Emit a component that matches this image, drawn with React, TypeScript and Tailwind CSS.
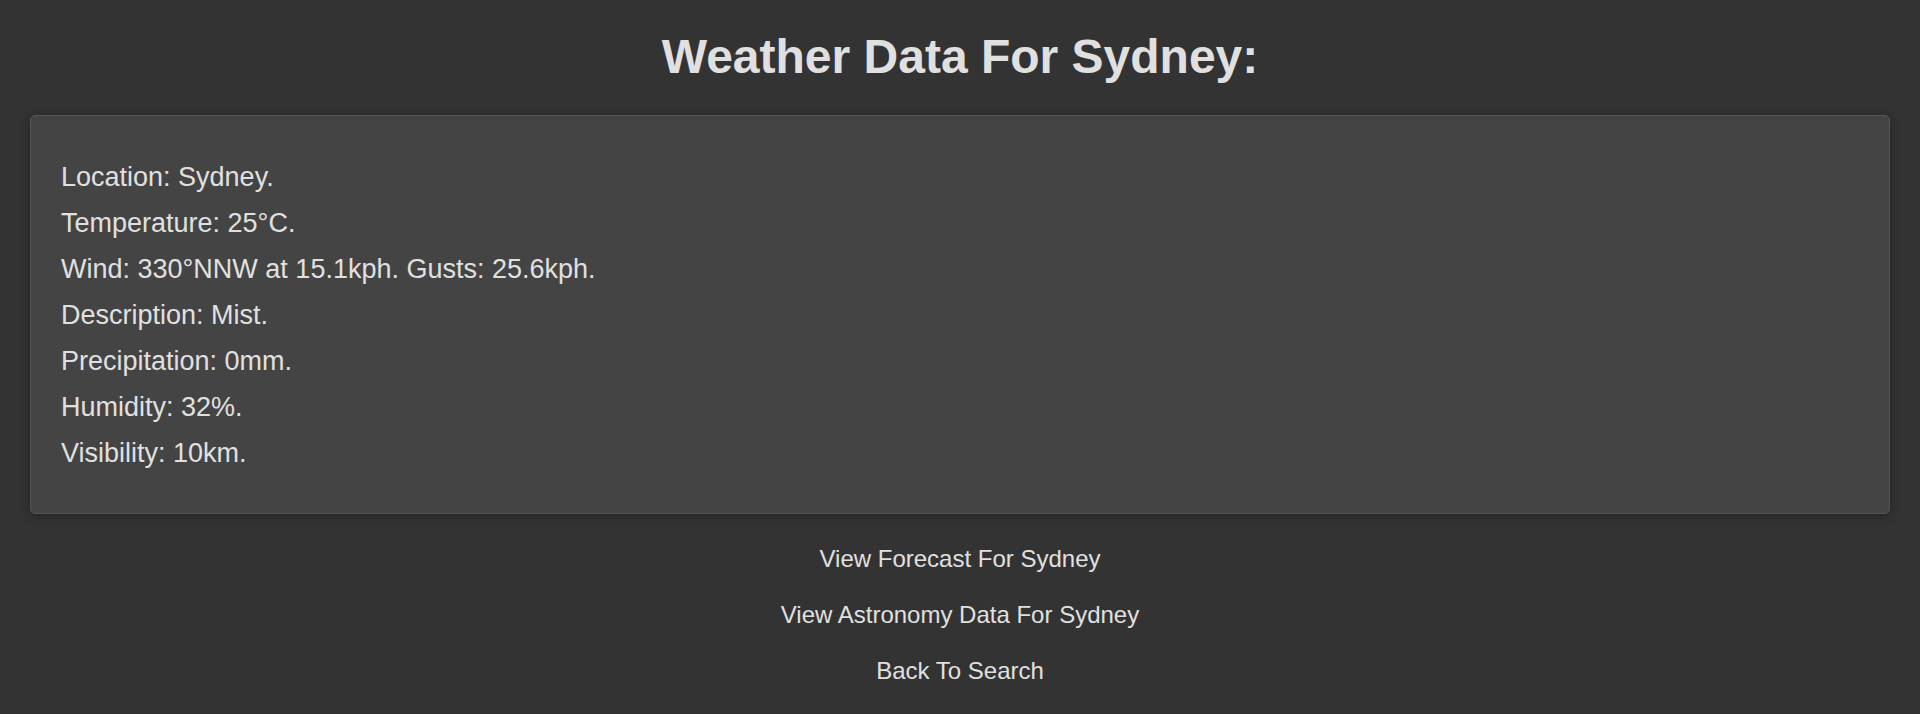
import React from "react";

const lines = [
  "Location: Sydney.",
  "Temperature: 25°C.",
  "Wind: 330°NNW at 15.1kph. Gusts: 25.6kph.",
  "Description: Mist.",
  "Precipitation: 0mm.",
  "Humidity: 32%.",
  "Visibility: 10km.",
];

const links = [
  "View Forecast For Sydney",
  "View Astronomy Data For Sydney",
  "Back To Search",
];

export default function App() {
  return (
    <div
      className="min-h-[714px] w-full bg-[#333333] text-[#e0e0e0] pt-[29px]"
      style={{ fontFamily: '"Liberation Sans", Arial, sans-serif' }}
    >
      <h1 className="text-center text-[48px] font-bold leading-[56px] text-[#e0e0e0]">
        Weather Data For Sydney:
      </h1>
      <div className="mx-[30px] mt-[30px] rounded-[5px] border border-[#555555] bg-[#444444] px-[30px] pt-[38px] pb-[37px] shadow-[0_2px_10px_rgba(0,0,0,0.35)]">
        {lines.map((l) => (
          <p key={l} className="text-[27px] leading-[46px] text-[#e0e0e0]">
            {l}
          </p>
        ))}
      </div>
      <div className="mt-[17px] flex flex-col items-center">
        {links.map((l) => (
          <a key={l} className="text-[24px] leading-[56px] text-[#e0e0e0] cursor-pointer">
            {l}
          </a>
        ))}
      </div>
    </div>
  );
}
